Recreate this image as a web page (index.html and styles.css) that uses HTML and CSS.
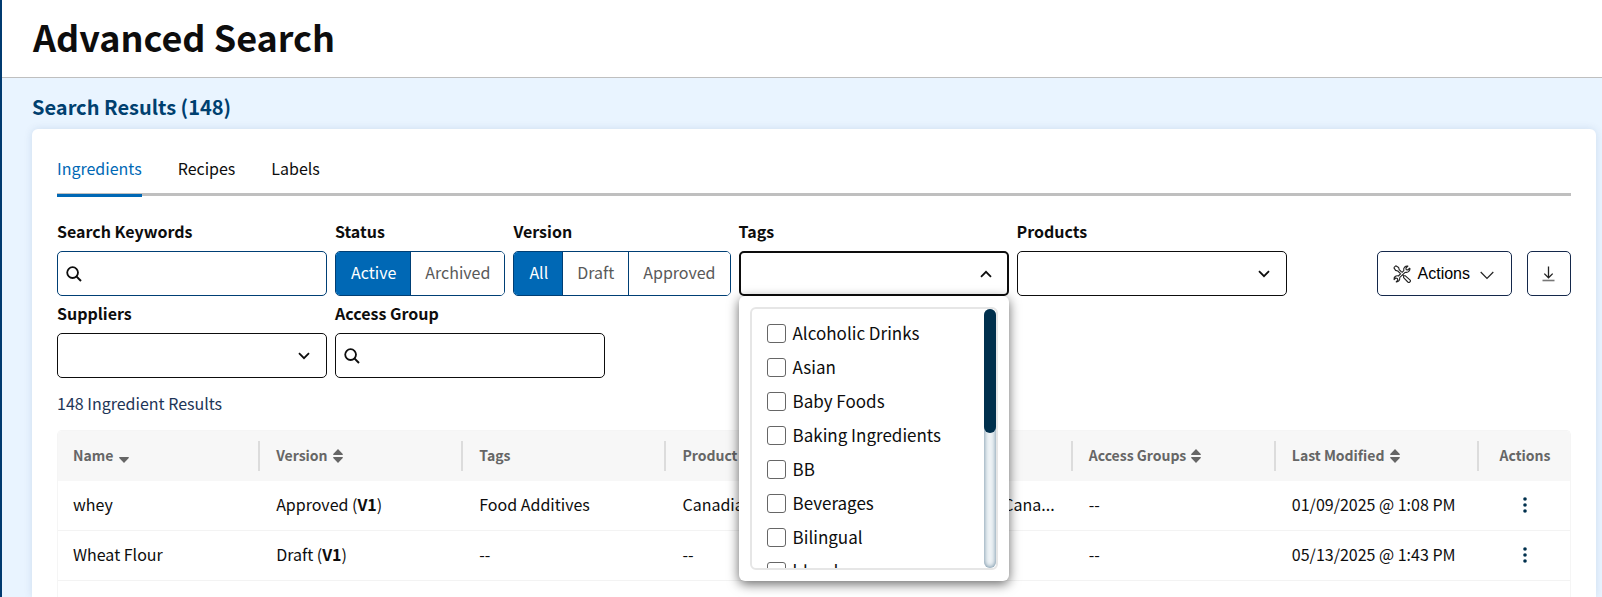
FILE: index.html
```html
<!DOCTYPE html>
<html lang="en">

<head>
    <meta charset="UTF-8">
    <meta name="viewport" content="width=device-width, initial-scale=1.0">
    <title>Advanced Search</title>
    <link rel="stylesheet" href="styles.css">
</head>

<body>
    <!-- shared icons -->
    <svg class="sprite" aria-hidden="true">
        <symbol id="icon-search" viewBox="0 0 16 16">
            <circle cx="6.6" cy="6.6" r="5.4" fill="none" stroke="currentColor" stroke-width="1.8" />
            <path d="M10.4 10.4L15 15" fill="none" stroke="currentColor" stroke-width="2" />
        </symbol>
        <symbol id="icon-sort" viewBox="0 0 10 14">
            <path d="M5 0L10 5.2Q10 6 9 6H1Q0 6 0 5.2ZM5 14L10 8.8Q10 8 9 8H1Q0 8 0 8.8Z" fill="currentColor" />
        </symbol>
        <symbol id="icon-sort-down" viewBox="0 0 10 14">
            <path d="M5 14L10 8.8Q10 8 9 8H1Q0 8 0 8.8Z" fill="currentColor" />
        </symbol>
        <symbol id="icon-down" viewBox="0 0 12 8">
            <path d="M1 1.2L6 6.2L11 1.2" fill="none" stroke="currentColor" stroke-width="1.8" />
        </symbol>
        <symbol id="icon-dots" viewBox="0 0 4 16">
            <circle cx="2" cy="2" r="1.8" />
            <circle cx="2" cy="8" r="1.8" />
            <circle cx="2" cy="14" r="1.8" />
        </symbol>
    </svg>

    <div class="app">
        <header class="page-header">
            <h1>Advanced Search</h1>
        </header>

        <main class="content">
            <h2>Search Results (148)</h2>

            <section class="card">
                <nav class="tabs">
                    <a href="#ingredients" class="tab active">Ingredients</a>
                    <a href="#recipes" class="tab">Recipes</a>
                    <a href="#labels" class="tab">Labels</a>
                </nav>

                <div class="toolbar">
                    <div class="filters">
                        <div class="field">
                            <label for="keywords">Search Keywords</label>
                            <div class="control">
                                <svg class="search-icon"><use href="#icon-search" /></svg>
                                <input type="text" id="keywords" class="box box-blue">
                            </div>
                        </div>
                        <div class="field">
                            <span class="label" id="status-label">Status</span>
                            <div class="segments" role="group" aria-labelledby="status-label">
                                <button type="button" class="on">Active</button>
                                <button type="button">Archived</button>
                            </div>
                        </div>
                        <div class="field">
                            <span class="label" id="version-label">Version</span>
                            <div class="segments" role="group" aria-labelledby="version-label">
                                <button type="button" class="on">All</button>
                                <button type="button">Draft</button>
                                <button type="button">Approved</button>
                            </div>
                        </div>
                        <div class="field">
                            <label for="tags">Tags</label>
                            <div class="control">
                                <select id="tags" class="box open"></select>
                                <svg class="arrow arrow-up"><use href="#icon-down" /></svg>
                                <div class="dropdown">
                                    <div class="options">
                                        <div class="option-list">
                                            <label><input type="checkbox">Alcoholic Drinks</label>
                                            <label><input type="checkbox">Asian</label>
                                            <label><input type="checkbox">Baby Foods</label>
                                            <label><input type="checkbox">Baking Ingredients</label>
                                            <label><input type="checkbox">BB</label>
                                            <label><input type="checkbox">Beverages</label>
                                            <label><input type="checkbox">Bilingual</label>
                                            <label><input type="checkbox">blend</label>
                                        </div>
                                        <div class="scroll-track">
                                            <div class="scroll-thumb"></div>
                                        </div>
                                    </div>
                                </div>
                            </div>
                        </div>
                        <div class="field">
                            <label for="products">Products</label>
                            <div class="control">
                                <select id="products" class="box"></select>
                                <svg class="arrow"><use href="#icon-down" /></svg>
                            </div>
                        </div>
                        <div class="field">
                            <label for="suppliers">Suppliers</label>
                            <div class="control">
                                <select id="suppliers" class="box"></select>
                                <svg class="arrow"><use href="#icon-down" /></svg>
                            </div>
                        </div>
                        <div class="field">
                            <label for="access">Access Group</label>
                            <div class="control">
                                <svg class="search-icon"><use href="#icon-search" /></svg>
                                <input type="text" id="access" class="box">
                            </div>
                        </div>
                    </div>

                    <div class="buttons">
                        <button type="button" class="btn">
                            <svg width="18" height="18" viewBox="0 0 18 18" fill="none" stroke="#222" stroke-width="1.1" stroke-linejoin="round">
                                <!-- screwdriver -->
                                <path d="M0.8 2.6L2.8 0.8L5.6 2.4L6.2 4.6L8.6 7M7.2 8.4L4.8 6L2.6 5.4L0.8 2.6" />
                                <path d="M10.6 10.8L12.4 10.8L16.9 14.8A1.5 1.5 0 0 1 14.8 17L10.6 12.7V10.8L9.6 9.8" />
                                <!-- wrench -->
                                <path d="M16.9 3L14.8 5L13.2 4.6L12.9 3L14.9 1.1A3.6 3.6 0 0 0 10.8 5.6L8.8 7.6M12.4 7.2A3.6 3.6 0 0 0 16.9 3M12.4 7.2L6.6 12.6M8 8.4L5.4 11A3.2 3.2 0 0 0 1.1 14.6L2.8 13L4.4 13.5L4.8 15L3.2 16.9A3.3 3.3 0 0 0 6.6 12.6" />
                            </svg>
                            <span>Actions</span>
                            <svg class="thin-arrow" width="14" height="9" viewBox="0 0 14 9" fill="none" stroke="#222"><path d="M0.7 1L7 7.4L13.3 1" stroke-width="1.2" /></svg>
                        </button>
                        <button type="button" class="btn btn-icon" aria-label="Download">
                            <svg width="14" height="16" viewBox="0 0 14 16" fill="none" stroke="#222"><path d="M6.5 0.5V11.6M2.3 7.6L6.5 11.8L10.7 7.6" stroke-width="1.3" /><path d="M0.5 14.5H12.5" stroke="#777" stroke-width="1.6" /></svg>
                        </button>
                    </div>
                </div>

                <p class="count">148 Ingredient Results</p>

                <div class="table-wrap">
                    <table>
                        <thead>
                            <tr>
                                <th>Name <svg class="sort"><use href="#icon-sort-down" /></svg></th>
                                <th>Version <svg class="sort"><use href="#icon-sort" /></svg></th>
                                <th>Tags</th>
                                <th>Product</th>
                                <th>Supplier</th>
                                <th>Access Groups <svg class="sort"><use href="#icon-sort" /></svg></th>
                                <th>Last Modified <svg class="sort"><use href="#icon-sort" /></svg></th>
                                <th class="col-actions">Actions</th>
                            </tr>
                        </thead>
                        <tbody>
                            <tr>
                                <td>whey</td>
                                <td>Approved (<b>V1</b>)</td>
                                <td>Food Additives</td>
                                <td>Canadian</td>
                                <td>Milk of Canada, Cana...</td>
                                <td>--</td>
                                <td>01/09/2025 @ 1:08 PM</td>
                                <td class="col-actions"><button type="button" class="dots" aria-label="Row actions"><svg><use href="#icon-dots" /></svg></button></td>
                            </tr>
                            <tr>
                                <td>Wheat Flour</td>
                                <td>Draft (<b>V1</b>)</td>
                                <td>--</td>
                                <td>--</td>
                                <td>--</td>
                                <td>--</td>
                                <td>05/13/2025 @ 1:43 PM</td>
                                <td class="col-actions"><button type="button" class="dots" aria-label="Row actions"><svg><use href="#icon-dots" /></svg></button></td>
                            </tr>
                        </tbody>
                    </table>
                </div>
            </section>
        </main>
    </div>
</body>

</html>
```
FILE: styles.css
```css
* {
    box-sizing: border-box;
}

body {
    margin: 0;
    font-family: "Noto Sans CJK SC", "Source Sans 3", sans-serif;
    font-size: 16px;
    line-height: 24px;
    color: #0d0d0d;
}

button,
input,
select {
    font: inherit;
    color: inherit;
}

.sprite {
    display: none;
}

.app {
    display: flex;
    flex-direction: column;
    height: 100vh;
    border-left: 2px solid #003a70;
}

.page-header {
    padding: 12px 31px 16px;
    border-bottom: 1px solid #bfbfbf;
}

h1 {
    margin: 0;
    font-size: 36px;
    line-height: 49px;
}

.content {
    flex: 1;
    display: flex;
    flex-direction: column;
    min-height: 0;
    padding: 15px 6px 0 30px;
    overflow: hidden;
    background-color: #e9f4ff;
}

h2 {
    margin: 0 0 8px;
    font-size: 20px;
    line-height: 28px;
    color: #00406f;
}

.card {
    flex: 1;
    display: flex;
    flex-direction: column;
    padding: 25px 25px 0;
    background-color: #fff;
    border-radius: 6px 6px 0 0;
    box-shadow: 0 0 8px rgba(0, 60, 120, 0.12);
}

/* tabs */
.tabs {
    display: flex;
    gap: 36px;
    height: 42px;
    border-bottom: 3px solid #bfbfbf;
}

.tab {
    height: 43px;
    padding-top: 2px;
    color: #0d0d0d;
    text-decoration: none;
}

.tab.active {
    color: #0068b5;
    border-bottom: 3px solid #0068b5;
}

/* filters */
.toolbar {
    display: flex;
    justify-content: space-between;
    margin-top: 23px;
}

.filters {
    display: flex;
    flex-wrap: wrap;
    gap: 5px 8px;
    max-width: 1250px;
}

.field > label,
.label {
    display: block;
    height: 32px;
    font-weight: bold;
}

.control {
    position: relative;
    width: 270px;
}

.box {
    display: block;
    width: 100%;
    height: 45px;
    padding: 0 16px;
    background-color: #fff;
    border: 1px solid #0d0d0d;
    border-radius: 5px;
    outline: none;
    appearance: none;
}

input.box {
    padding-left: 36px;
}

.box-blue {
    border-color: #003f75;
}

.box.open {
    border-width: 2px;
}

.search-icon {
    position: absolute;
    left: 9px;
    top: 15px;
    width: 16px;
    height: 16px;
}

.arrow {
    position: absolute;
    right: 17px;
    top: 19px;
    width: 12px;
    height: 8px;
    pointer-events: none;
}

.arrow-up {
    transform: rotate(180deg);
}

.segments {
    display: flex;
    height: 45px;
    border: 1px solid #003f75;
    border-radius: 5px;
    overflow: hidden;
}

.segments button {
    padding: 0 14px 3px 15px;
    color: #595959;
    background-color: #fff;
    border: none;
}

.segments button + button {
    padding-left: 14px;
    border-left: 1px solid #003f75;
}

.segments .on {
    color: #fff;
    background-color: #0068b5;
}

/* tags dropdown */
.dropdown {
    position: absolute;
    top: 45px;
    left: 0;
    z-index: 2;
    width: 100%;
    padding: 11px;
    background-color: #fff;
    border-radius: 6px;
    box-shadow: 0 3px 12px rgba(0, 0, 0, 0.6);
}

.options {
    display: flex;
    height: 263px;
    border: 2px solid #e6e6e6;
    border-radius: 6px;
    overflow: hidden;
}

.option-list {
    flex: 1;
    padding: 7px 0 0 15px;
    overflow: hidden;
}

.option-list label {
    display: flex;
    align-items: center;
    gap: 7px;
    height: 34px;
    font-size: 17px;
}

.option-list input {
    width: 19px;
    height: 19px;
    margin: 0;
    border: 1px solid #666;
    border-radius: 3px;
    appearance: none;
}

.scroll-track {
    width: 12px;
    border-radius: 6px;
    background-color: #eef3f6;
    box-shadow: inset 0 0 5px #5f7f96;
}

.scroll-thumb {
    height: 48%;
    border-radius: 6px;
    background-color: #00304d;
}

/* right buttons */
.buttons {
    display: flex;
    gap: 15px;
    padding-top: 32px;
}

.btn {
    display: flex;
    align-items: center;
    justify-content: center;
    gap: 7px;
    height: 45px;
    padding: 0 17px 0 15px;
    font-family: "Liberation Sans", Arial, sans-serif;
    color: #000;
    background-color: #fff;
    border: 1px solid #14284b;
    border-radius: 5px;
}

.thin-arrow {
    margin: 4px 0 0 3px;
}

.btn-icon {
    width: 44px;
    padding: 0;
}

.count {
    margin: 13px 0 15px;
    color: #1d3557;
}

/* table */
.table-wrap {
    flex: 1;
    border: 1px solid #f5f5f5;
    border-bottom: none;
    border-radius: 5px 5px 0 0;
    overflow: hidden;
}

table {
    width: 100%;
    table-layout: fixed;
    border-collapse: separate;
    border-spacing: 0;
}

th,
td {
    height: 50px;
    padding: 0 15px 3px;
    text-align: left;
    white-space: nowrap;
}

th {
    font-size: 14px;
    color: #666;
    background: linear-gradient(#dcdcdc, #dcdcdc) right 1px center / 2px 30px no-repeat #f7f7f7;
}

td {
    border-bottom: 1px solid #f3f3f3;
}

.col-actions {
    width: 90px;
    padding: 0;
    text-align: center;
}

th.col-actions {
    padding-bottom: 3px;
    background: #f7f7f7;
}

.sort {
    width: 10px;
    height: 14px;
    margin-left: 2px;
    vertical-align: -2px;
}

.dots {
    padding: 0 8px;
    background: none;
    border: none;
    color: #00304d;
}

.dots svg {
    display: block;
    width: 4px;
    height: 16px;
    fill: currentColor;
}
```
